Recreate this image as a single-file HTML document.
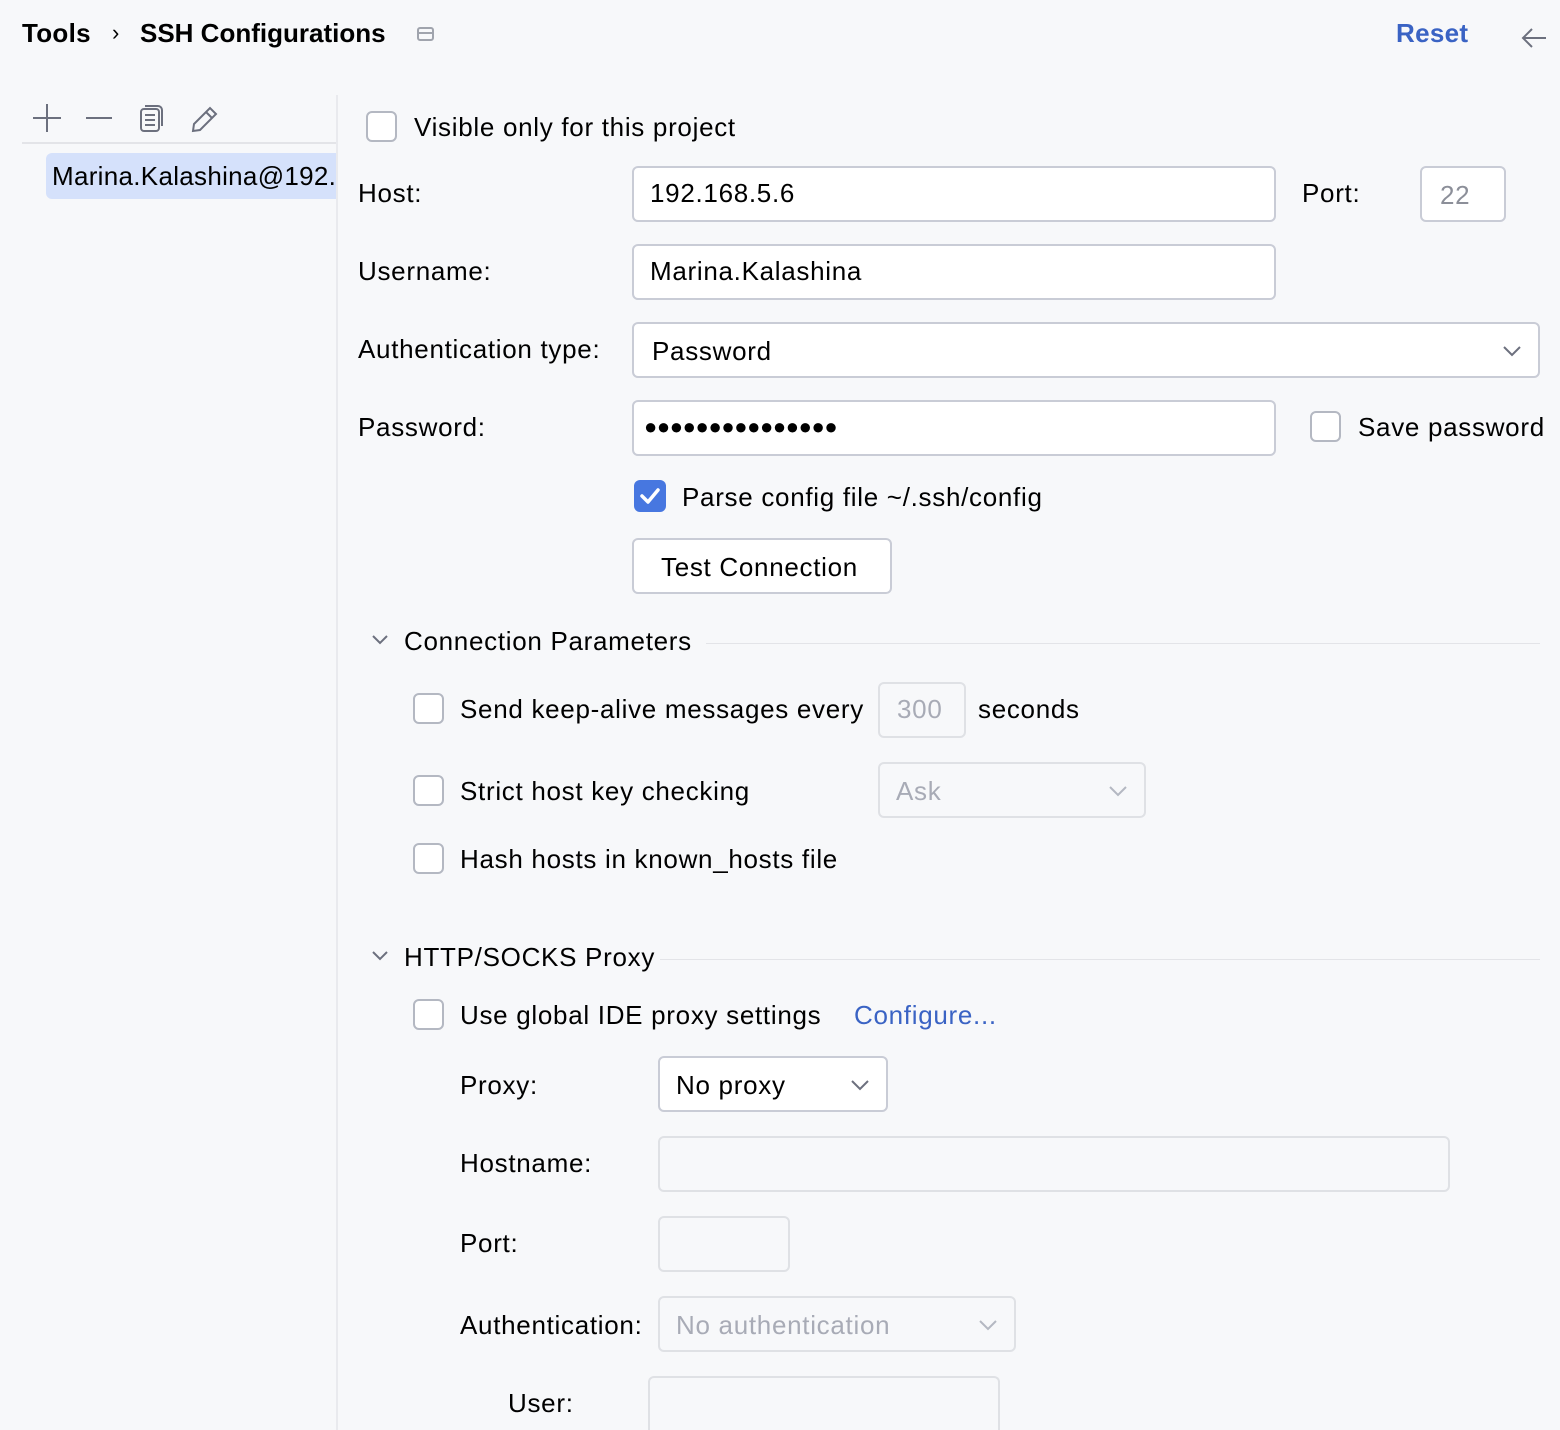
<!DOCTYPE html>
<html><head><meta charset="utf-8"><style>
*{box-sizing:border-box;margin:0;padding:0}
html,body{overflow:hidden}
body{width:1560px;height:1430px;background:#f7f8fa;font-family:"Liberation Sans",sans-serif;font-size:26px;letter-spacing:0.7px;color:#000;position:relative;overflow:hidden}
.a{position:absolute;white-space:nowrap;line-height:30px}
.f{position:absolute;background:#fff;border:2px solid #c9ccd6;border-radius:6px}
.d{position:absolute;border:2px solid #dfe1e5;border-radius:6px}
.cb{position:absolute;width:31px;height:31px;border:2px solid #b4b8c2;border-radius:6px;background:#fff}
.chev{position:absolute}
.line{position:absolute;height:1px;background:#e3e4e8}
</style></head><body>
<div class="a" style="left:22px;top:18px;font-weight:bold;font-size:26px;letter-spacing:0.3px">Tools</div>
<div class="a" style="left:112px;top:18px;font-size:22px">›</div>
<div class="a" style="left:140px;top:18px;font-weight:bold;font-size:26px;letter-spacing:0">SSH Configurations</div>
<div style="position:absolute;left:417px;top:27px;width:17px;height:14px;border:2px solid #a0a4ad;border-radius:3px"><div style="height:2px;background:#a0a4ad;margin-top:3px"></div></div>
<div class="a" style="left:1396px;top:18px;font-weight:bold;color:#3a63c4;font-size:26px;letter-spacing:0.3px">Reset</div>
<svg style="position:absolute;left:1520px;top:26px" width="28" height="24"><path d="M26 12H3M12 3L3 12L12 21" stroke="#6c707e" stroke-width="2" fill="none"/></svg>

<svg style="position:absolute;left:30px;top:100px" width="200" height="36" fill="none" stroke="#6c707e" stroke-width="2">
<path d="M17 4V32M3 18H31"/><path d="M56 18H82"/>
<rect x="111" y="9" width="18" height="22" rx="3"/><path d="M115 6h13a4 4 0 0 1 4 4v16M115 15h10M115 20h10M115 25h10"/>
<path d="M163 31l1-7L180 8l6 6L170 30zM176 12l6 6"/>
</svg>
<div class="line" style="left:22px;top:142px;width:315px;height:2px"></div>
<div style="position:absolute;left:46px;top:153px;width:291px;height:46px;background:#d5e1fb;border-radius:6px 0 0 6px"></div>
<div class="a" style="left:52px;top:161px;width:285px;overflow:hidden;letter-spacing:0.3px">Marina.Kalashina@192.</div>
<div style="position:absolute;left:336px;top:95px;width:2px;height:1335px;background:#e9eaee"></div>

<div class="cb" style="left:366px;top:111px"></div>
<div class="a" style="left:414px;top:112px">Visible only for this project</div>

<div class="a" style="left:358px;top:178px">Host:</div>
<div class="f" style="left:632px;top:166px;width:644px;height:56px"></div>
<div class="a" style="left:650px;top:178px">192.168.5.6</div>
<div class="a" style="left:1302px;top:178px">Port:</div>
<div class="f" style="left:1420px;top:166px;width:86px;height:56px"></div>
<div class="a" style="left:1440px;top:180px;color:#8c8f99">22</div>

<div class="a" style="left:358px;top:256px">Username:</div>
<div class="f" style="left:632px;top:244px;width:644px;height:56px"></div>
<div class="a" style="left:650px;top:256px">Marina.Kalashina</div>

<div class="a" style="left:358px;top:334px">Authentication type:</div>
<div class="f" style="left:632px;top:322px;width:908px;height:56px"></div>
<div class="a" style="left:652px;top:336px">Password</div>
<svg class="chev" style="left:1502px;top:344px" width="20" height="14"><path d="M2 3l8 8 8-8" stroke="#6c707e" stroke-width="2" fill="none"/></svg>

<div class="a" style="left:358px;top:412px">Password:</div>
<div class="f" style="left:632px;top:400px;width:644px;height:56px"></div>
<div class="a" style="left:644px;top:412px;font-size:22px;letter-spacing:-0.4px">●●●●●●●●●●●●●●●</div>
<div class="cb" style="left:1310px;top:411px"></div>
<div class="a" style="left:1358px;top:412px">Save password</div>

<div style="position:absolute;left:634px;top:480px;width:32px;height:32px;background:#4777e0;border-radius:6px"><svg width="32" height="32"><path d="M8 16l6 6 10-12" stroke="#fff" stroke-width="3.5" fill="none" stroke-linecap="round" stroke-linejoin="round"/></svg></div>
<div class="a" style="left:682px;top:482px">Parse config file ~/.ssh/config</div>
<div class="f" style="left:632px;top:538px;width:260px;height:56px"></div>
<div class="a" style="left:661px;top:552px">Test Connection</div>

<svg class="chev" style="left:371px;top:633px" width="18" height="14"><path d="M2 3l7 7 7-7" stroke="#6c707e" stroke-width="2" fill="none"/></svg>
<div class="a" style="left:404px;top:626px">Connection Parameters</div>
<div class="line" style="left:706px;top:643px;width:834px"></div>

<div class="cb" style="left:413px;top:693px"></div>
<div class="a" style="left:460px;top:694px">Send keep-alive messages every</div>
<div class="d" style="left:878px;top:682px;width:88px;height:56px"></div>
<div class="a" style="left:897px;top:694px;color:#a8abb6">300</div>
<div class="a" style="left:978px;top:694px">seconds</div>

<div class="cb" style="left:413px;top:775px"></div>
<div class="a" style="left:460px;top:776px">Strict host key checking</div>
<div class="d" style="left:878px;top:762px;width:268px;height:56px"></div>
<div class="a" style="left:896px;top:776px;color:#a8abb6">Ask</div>
<svg class="chev" style="left:1108px;top:784px" width="20" height="14"><path d="M2 3l8 8 8-8" stroke="#b4b8c2" stroke-width="2" fill="none"/></svg>

<div class="cb" style="left:413px;top:843px"></div>
<div class="a" style="left:460px;top:844px">Hash hosts in known_hosts file</div>

<svg class="chev" style="left:371px;top:949px" width="18" height="14"><path d="M2 3l7 7 7-7" stroke="#6c707e" stroke-width="2" fill="none"/></svg>
<div class="a" style="left:404px;top:942px">HTTP/SOCKS Proxy</div>
<div class="line" style="left:660px;top:959px;width:880px"></div>

<div class="cb" style="left:413px;top:999px"></div>
<div class="a" style="left:460px;top:1000px">Use global IDE proxy settings</div>
<div class="a" style="left:854px;top:1000px;color:#3a63c4">Configure...</div>

<div class="a" style="left:460px;top:1070px">Proxy:</div>
<div class="f" style="left:658px;top:1056px;width:230px;height:56px"></div>
<div class="a" style="left:676px;top:1070px">No proxy</div>
<svg class="chev" style="left:850px;top:1078px" width="20" height="14"><path d="M2 3l8 8 8-8" stroke="#6c707e" stroke-width="2" fill="none"/></svg>

<div class="a" style="left:460px;top:1148px">Hostname:</div>
<div class="d" style="left:658px;top:1136px;width:792px;height:56px"></div>
<div class="a" style="left:460px;top:1228px">Port:</div>
<div class="d" style="left:658px;top:1216px;width:132px;height:56px"></div>
<div class="a" style="left:460px;top:1310px">Authentication:</div>
<div class="d" style="left:658px;top:1296px;width:358px;height:56px"></div>
<div class="a" style="left:676px;top:1310px;color:#a8abb6">No authentication</div>
<svg class="chev" style="left:978px;top:1318px" width="20" height="14"><path d="M2 3l8 8 8-8" stroke="#b4b8c2" stroke-width="2" fill="none"/></svg>
<div class="a" style="left:508px;top:1388px">User:</div>
<div class="d" style="left:648px;top:1376px;width:352px;height:54px;border-bottom:none;border-radius:6px 6px 0 0"></div>
</body></html>
